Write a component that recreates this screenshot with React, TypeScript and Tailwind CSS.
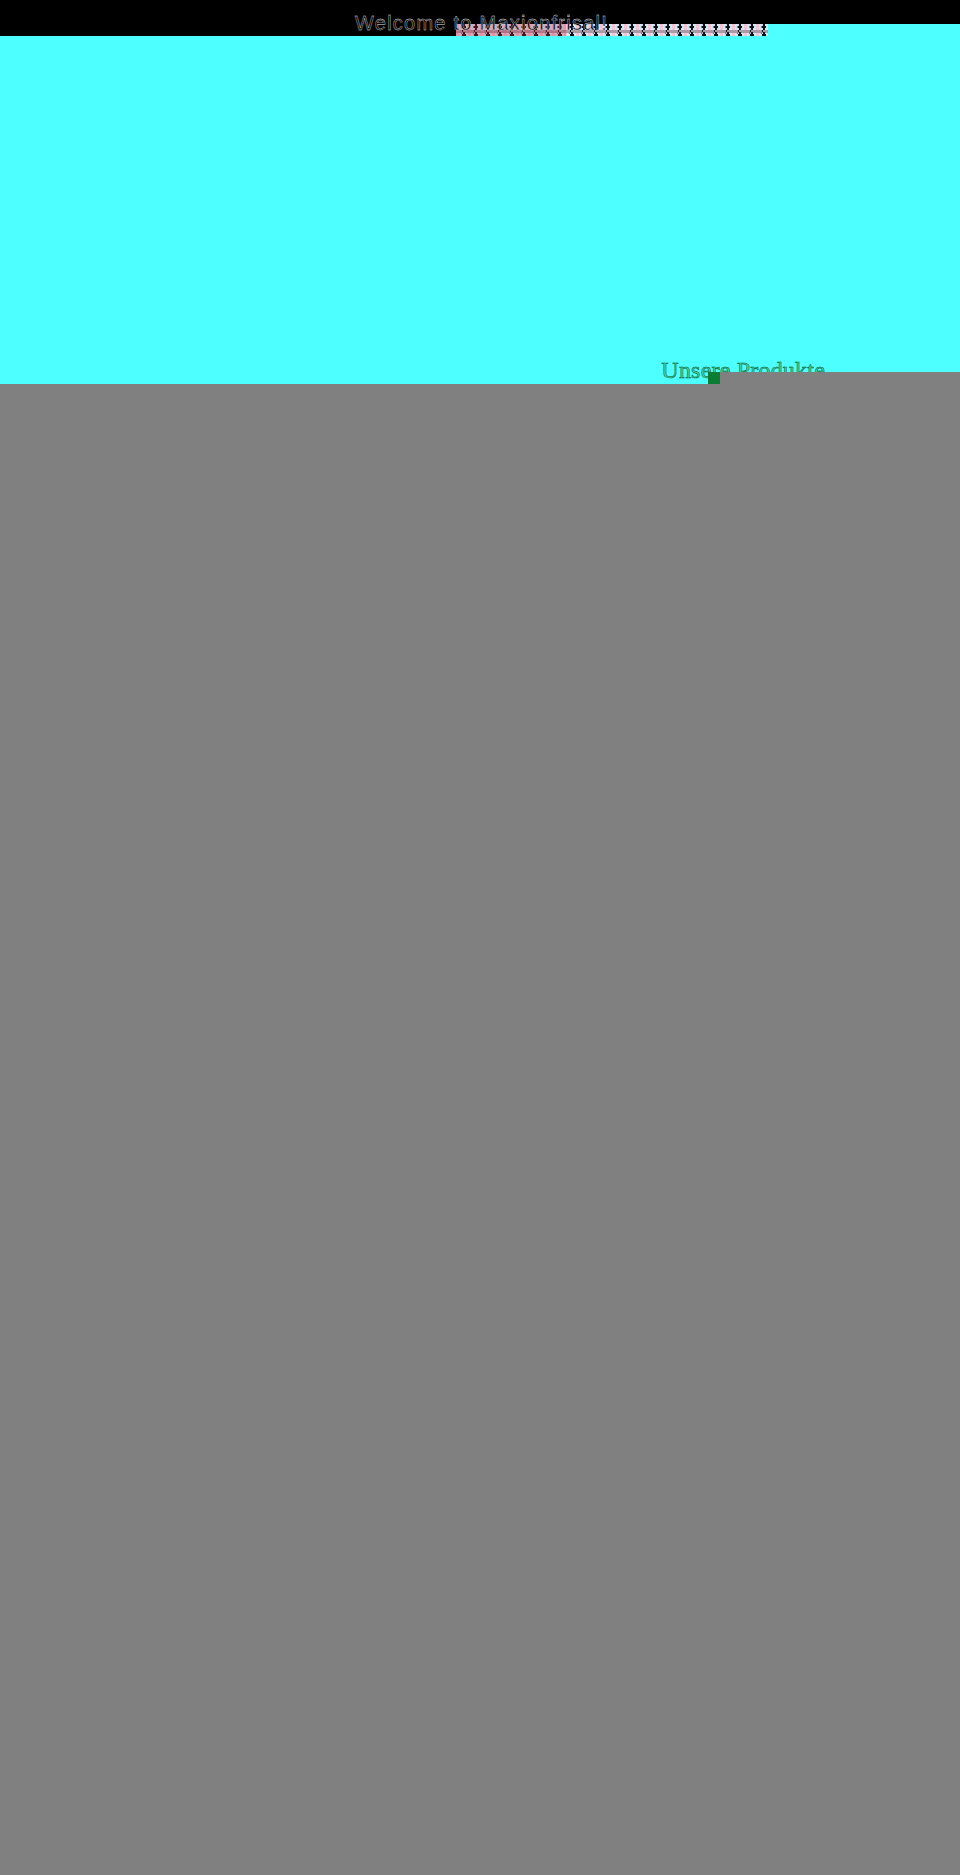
function Strip() {
  return (
    <svg width="312" height="12" viewBox="0 0 312 12" className="block">
      <defs>
        <pattern id="strip" width="12" height="12" patternUnits="userSpaceOnUse">
          <rect width="12" height="12" fill="#d8d0ee" />
          <rect x="0" width="3" height="12" fill="#f4c4d6" />
          <rect x="3" width="3" height="12" fill="#c8ecf6" />
          <rect x="9" width="3" height="12" fill="#c8ecf6" />
          <rect y="6" width="12" height="3" fill="#a89aa6" />
          <path d="M7 0h2v2h1v2H9v2H7v2h2v2h1v2H6v-2h1V8H6V6h1V4H6V2h1z" fill="#111" />
          <rect x="5" y="2" width="1" height="2" fill="#e0406c" />
          <rect x="5" y="8" width="1" height="2" fill="#e0406c" />
        </pattern>
      </defs>
      <rect width="312" height="12" fill="url(#strip)" />
      <rect width="110" height="12" fill="#c0203c" opacity="0.3" />
    </svg>
  );
}

export default function App() {
  return (
    <div className="relative flex h-[1875px] w-[960px] flex-col overflow-hidden bg-[#4dffff] font-['Liberation_Sans',sans-serif]">
      <header className="flex h-9">
        <div className="w-[456px] bg-black" />
        <div className="flex w-[312px] flex-col">
          <div className="h-6 bg-black" />
          <Strip />
        </div>
        <div className="flex flex-1 flex-col">
          <div className="h-6 bg-black" />
        </div>
      </header>
      <h1 className="absolute left-[355px] top-[11px] text-[20px] leading-[24px] font-normal tracking-[1.25px] text-black [-webkit-text-stroke:0.35px_#e8e8e8]">
        Welcome to Maxionfrisal!
      </h1>

      <section className="flex h-[336px] items-end justify-end">
        <h2 className="mr-[135px] mb-[-12px] font-['Liberation_Serif',serif] text-[24px] leading-[28px] font-normal tracking-[0.2px] text-[#4dd0a0] [-webkit-text-stroke:0.5px_#04592a]">
          Unsere Produkte
        </h2>
      </section>

      <div className="relative z-10 flex h-3">
        <div className="w-[708px]" />
        <div className="w-3 bg-[#0a7d32]" />
        <div className="flex-1 bg-[#808080]" />
      </div>
      <main className="relative z-10 flex-1 bg-[#808080]" />
    </div>
  );
}
